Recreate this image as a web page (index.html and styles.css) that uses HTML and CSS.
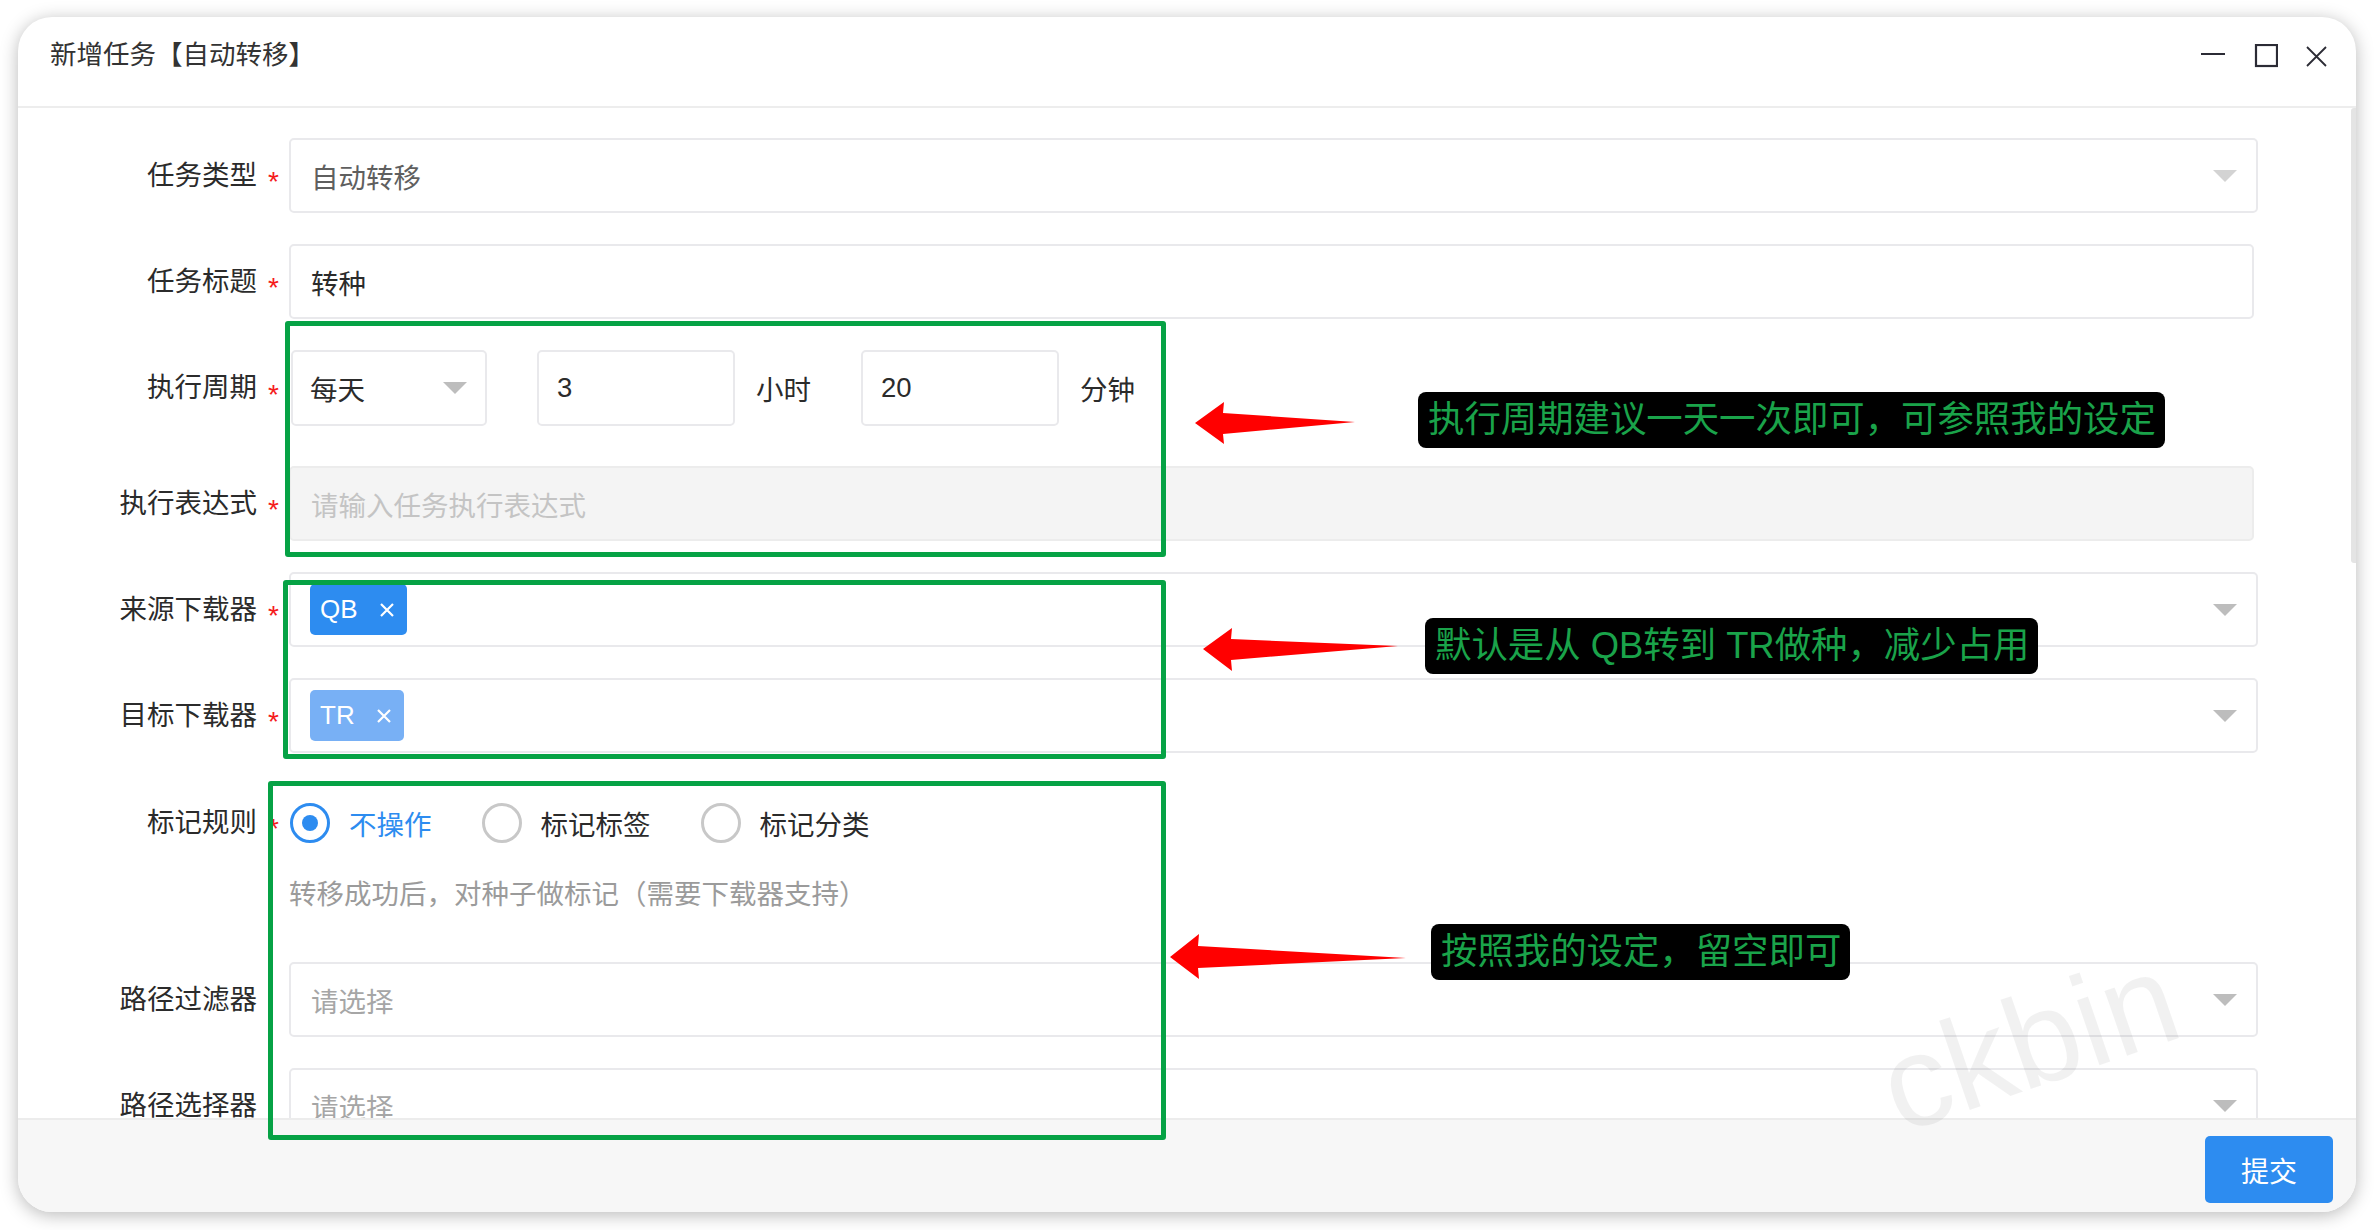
FILE: index.html
```html
<!DOCTYPE html>
<html lang="zh-CN">
<head>
<meta charset="utf-8">
<title>新增任务【自动转移】</title>
<link rel="stylesheet" href="styles.css">
</head>
<body>
<div class="window">
  <div class="header">
    <div class="title">新增任务【自动转移】</div>
    <div class="controls">
      <svg class="ctl" viewBox="0 0 24 24"><line x1="0" y1="10" x2="24" y2="10" stroke="#2b2b35" stroke-width="2"/></svg>
      <svg class="ctl ctl-max" viewBox="0 0 24 24"><rect x="2" y="1" width="21" height="21" fill="none" stroke="#2b2b35" stroke-width="2.2"/></svg>
      <svg class="ctl ctl-close" viewBox="0 0 24 24"><path d="M3 3 L22 22 M22 3 L3 22" stroke="#2b2b35" stroke-width="1.8" fill="none"/></svg>
    </div>
  </div>
  <div class="body">
    <div class="form">
      <div class="row">
        <div class="label">任务类型</div><div class="req">*</div>
        <div class="field">
          <div class="control select"><span class="muted">自动转移</span><svg class="caret" viewBox="0 0 24 12"><polygon points="0,0 24,0 12,12" fill="#d3d3d3"/></svg></div>
        </div>
      </div>
      <div class="row">
        <div class="label">任务标题</div><div class="req">*</div>
        <div class="field">
          <div class="control input"><span>转种</span></div>
        </div>
      </div>
      <div class="row row-cycle">
        <div class="label">执行周期</div><div class="req">*</div>
        <div class="field cycle">
          <div class="control cycle-select"><span>每天</span><svg class="caret" viewBox="0 0 24 12"><polygon points="0,0 24,0 12,12" fill="#bdbdbd"/></svg></div>
          <div class="control cycle-input"><span>3</span></div>
          <span class="unit">小时</span>
          <div class="control cycle-input"><span>20</span></div>
          <span class="unit">分钟</span>
        </div>
      </div>
      <div class="row">
        <div class="label">执行表达式</div><div class="req">*</div>
        <div class="field">
          <div class="control input disabled"><span class="ph-light">请输入任务执行表达式</span></div>
        </div>
      </div>
      <div class="row">
        <div class="label">来源下载器</div><div class="req">*</div>
        <div class="field">
          <div class="control select tags">
            <span class="tag">QB<svg class="x" viewBox="0 0 14 14"><path d="M1 1 L13 13 M13 1 L1 13" stroke="#fff" stroke-width="2.2"/></svg></span>
            <svg class="caret" viewBox="0 0 24 12"><polygon points="0,0 24,0 12,12" fill="#bdbdbd"/></svg>
          </div>
        </div>
      </div>
      <div class="row">
        <div class="label">目标下载器</div><div class="req">*</div>
        <div class="field">
          <div class="control select tags">
            <span class="tag light">TR<svg class="x" viewBox="0 0 14 14"><path d="M1 1 L13 13 M13 1 L1 13" stroke="#fff" stroke-width="2.2"/></svg></span>
            <svg class="caret" viewBox="0 0 24 12"><polygon points="0,0 24,0 12,12" fill="#bdbdbd"/></svg>
          </div>
        </div>
      </div>
      <div class="row row-top">
        <div class="label">标记规则</div><div class="req">*</div>
        <div class="field">
          <div class="radios">
            <span class="radio checked"><span class="dot"></span>不操作</span>
            <span class="radio"><span class="dot"></span>标记标签</span>
            <span class="radio"><span class="dot"></span>标记分类</span>
          </div>
          <div class="help">转移成功后，对种子做标记（需要下载器支持）</div>
        </div>
      </div>
      <div class="row">
        <div class="label">路径过滤器</div><div class="req"></div>
        <div class="field">
          <div class="control select"><span class="ph">请选择</span><svg class="caret" viewBox="0 0 24 12"><polygon points="0,0 24,0 12,12" fill="#bdbdbd"/></svg></div>
        </div>
      </div>
      <div class="row">
        <div class="label">路径选择器</div><div class="req"></div>
        <div class="field">
          <div class="control select"><span class="ph">请选择</span><svg class="caret" viewBox="0 0 24 12"><polygon points="0,0 24,0 12,12" fill="#bdbdbd"/></svg></div>
        </div>
      </div>
    </div>
    <div class="thumb"></div>
  </div>
  <div class="footer"><button class="submit">提交</button></div>
</div>

<div class="watermark">ckbin</div>

<div class="frame f1"></div>
<div class="frame f2"></div>
<div class="frame f3"></div>

<svg class="arrows" viewBox="0 0 2374 1230">
  <polygon points="1195,423 1224,402 1223,413 1355,422 1223,434 1224,444" fill="#ff0000"/>
  <polygon points="1203,649 1232,628 1231,639 1398,646 1231,660 1232,671" fill="#ff0000"/>
  <polygon points="1170,957 1199,934 1198,946 1406,958 1198,968 1199,979" fill="#ff0000"/>
</svg>

<div class="note n1">执行周期建议一天一次即可，可参照我的设定</div>
<div class="note n2">默认是从 QB转到 TR做种，减少占用</div>
<div class="note n3">按照我的设定，留空即可</div>
</body>
</html>
```

FILE: styles.css
```css
* { box-sizing: border-box; }
html, body { margin: 0; }
body {
  width: 2374px;
  height: 1230px;
  padding: 17px 0 0 18px;
  position: relative;
  overflow: hidden;
  background: #fff;
  font-family: "Liberation Sans", "Noto Sans CJK SC", sans-serif;
  color: #2b2b2b;
}

.window {
  width: 2338px;
  height: 1195px;
  border-radius: 34px;
  background: #fff;
  box-shadow: 0 3px 18px rgba(0, 0, 0, 0.28);
  overflow: hidden;
  display: flex;
  flex-direction: column;
}

.header {
  height: 91px;
  flex: none;
  border-bottom: 2px solid #ededed;
  display: flex;
  align-items: center;
  padding: 0 28px 12px 32px;
}
.title { flex: 1; font-size: 26.5px; line-height: 1; color: #333; }
.controls { display: flex; align-items: center; }
.ctl { display: block; width: 24px; height: 24px; }
.ctl-max { margin-left: 29px; }
.ctl-close { margin-left: 26px; }

.body {
  flex: 1;
  position: relative;
  overflow: hidden;
  padding-top: 30px;
}
.form { padding-right: 98px; }

.row { display: flex; align-items: center; margin-bottom: 31px; }
.row-cycle { margin-bottom: 40px; }
.row-top { align-items: flex-start; margin-bottom: 47px; }
.row-top .label { padding-top: 19px; }
.row-top .req { margin-top: 18px; }

.label {
  width: 239px;
  flex: none;
  text-align: right;
  font-size: 27.5px;
  line-height: 40px;
  white-space: nowrap;
  color: #2b2b2b;
}
.req {
  width: 32px;
  flex: none;
  padding-left: 11px;
  padding-top: 13px;
  font-size: 28px;
  line-height: 28px;
  color: #f51b1b;
}
.field { flex: 1; min-width: 0; }

.control {
  height: 75px;
  border: 2px solid #e9e9ec;
  border-radius: 5px;
  background: #fff;
  display: flex;
  align-items: center;
  font-size: 27.5px;
  color: #2b2b2b;
  white-space: nowrap;
}
.select { padding: 0 19px 0 20px; }
.input { padding: 0 20px; margin-right: 4px; }
.caret { display: block; margin-left: auto; width: 24px; height: 12px; flex: none; }
.muted { color: #5f5f5f; }
.disabled { background: #f4f4f4; border-color: #ececec; }
.ph-light { color: #c4c4c4; }
.ph { color: #a6a6a6; }

.cycle { display: flex; align-items: center; }
.cycle-select { width: 196px; height: 76px; margin-left: 2px; padding: 0 18px 0 17px; }
.cycle-input { width: 198px; height: 76px; padding: 0 18px; margin-left: 50px; }
.unit { margin-left: 21px; font-size: 27.5px; white-space: nowrap; }

.tags { padding-left: 19px; }
.tag {
  height: 51px;
  border-radius: 5px;
  background: #2d8cf0;
  color: #fff;
  display: flex;
  align-items: center;
  padding: 0 13px 0 10px;
  font-size: 26px;
}
.tag.light { background: #78b0f5; }
.tag .x { display: block; width: 14px; height: 14px; margin-left: 22px; }

.radios { height: 78px; display: flex; align-items: center; margin-left: 1px; }
.radio {
  display: flex;
  align-items: center;
  margin-right: 50px;
  font-size: 27.5px;
  color: #2b2b2b;
}
.radio .dot {
  width: 40px;
  height: 40px;
  border: 3px solid #c8c8c8;
  border-radius: 50%;
  margin-right: 19px;
  display: flex;
  align-items: center;
  justify-content: center;
}
.radio.checked { color: #2d8cf0; }
.radio.checked .dot { border-color: #2d8cf0; }
.radio.checked .dot::after {
  content: "";
  width: 16px;
  height: 16px;
  border-radius: 50%;
  background: #2d8cf0;
}
.help { margin-top: 13px; font-size: 27.5px; line-height: 40px; color: #9b9b9b; white-space: nowrap; }

.thumb {
  position: absolute;
  right: 0;
  top: 0;
  width: 5px;
  height: 455px;
  background: #e4e4e4;
  border-radius: 3px 0 0 3px;
}

.footer {
  height: 94px;
  flex: none;
  border-top: 2px solid #ececec;
  background: #f7f7f7;
  display: flex;
  justify-content: flex-end;
  align-items: flex-start;
  padding: 16px 23px 0 0;
}
.submit {
  width: 128px;
  height: 67px;
  border: none;
  border-radius: 5px;
  background: #2d8cf0;
  color: #fff;
  font-family: inherit;
  font-size: 28px;
  padding: 0;
}

/* annotations overlaid on the screenshot */
.frame {
  position: absolute;
  border: 5px solid #06a245;
  border-radius: 3px;
  pointer-events: none;
}
.f1 { left: 285px; top: 321px; width: 881px; height: 236px; }
.f2 { left: 283px; top: 580px; width: 883px; height: 179px; }
.f3 { left: 268px; top: 781px; width: 898px; height: 359px; }

.arrows {
  position: absolute;
  left: 0;
  top: 0;
  width: 2374px;
  height: 1230px;
  pointer-events: none;
}

.note {
  position: absolute;
  height: 56px;
  line-height: 56px;
  padding: 0 9px 0 10px;
  background: #000;
  color: #1aa34a;
  font-size: 36.4px;
  border-radius: 8px;
  white-space: nowrap;
}
.n1 { left: 1418px; top: 392px; }
.n2 { left: 1425px; top: 618px; }
.n3 { left: 1431px; top: 924px; }

.watermark {
  position: absolute;
  left: 1877px;
  top: 977px;
  font-size: 130px;
  line-height: 130px;
  color: rgba(0, 0, 0, 0.055);
  transform: rotate(-19deg);
  pointer-events: none;
  white-space: nowrap;
}
```
